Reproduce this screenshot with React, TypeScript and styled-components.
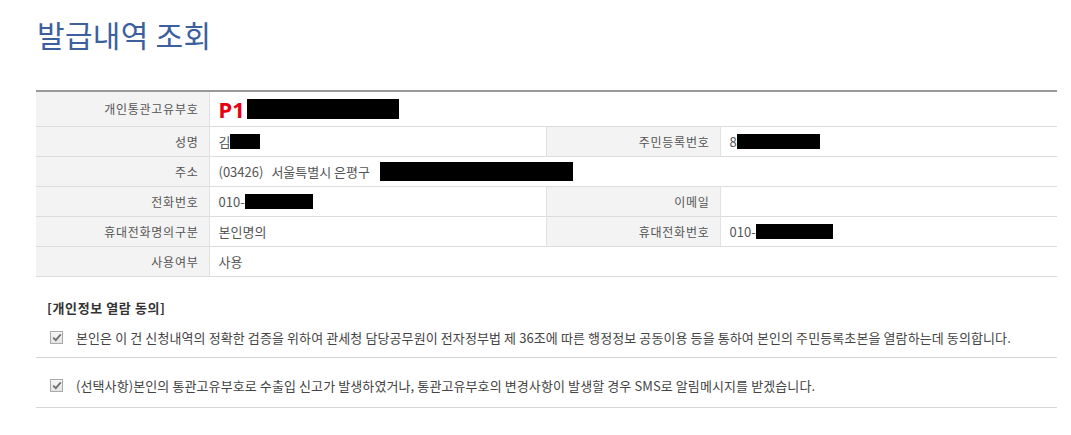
import React from 'react';
import styled, { createGlobalStyle } from 'styled-components';

const GlobalStyle = createGlobalStyle`
  body {
    margin: 0;
    background: #ffffff;
    font-family: "Noto Sans CJK KR", "Noto Sans", sans-serif;
    color: #555;
  }
`;

const Page = styled.div`
  width: 1021px;
  padding: 13px 0 0 36px;
`;

const Title = styled.h2`
  margin: 0 0 0 1px;
  font-size: 30px;
  line-height: 42px;
  font-weight: 400;
  color: #3d5f9e;
  letter-spacing: 0.3px;
`;

const InfoTable = styled.table`
  width: 1021px;
  margin-top: 35px;
  border-collapse: collapse;
  table-layout: fixed;
  border-top: 2px solid #999;
`;

const Row = styled.tr<{ $tall?: boolean }>`
  height: ${(p) => (p.$tall ? '35px' : '30px')};
  border-bottom: 1px solid #dcdcdc;
`;

const Label = styled.th`
  background: #f3f3f3;
  color: #555;
  font-size: 12px;
  font-weight: 400;
  letter-spacing: 0.75px;
  text-align: right;
  padding: 0 10px 0 0;
  border-right: 1px solid #e2e2e2;
  white-space: nowrap;
`;

const Value = styled.td<{ $edge?: boolean }>`
  padding: 0 0 0 9px;
  font-size: 13px;
  color: #555;
  white-space: nowrap;
  border-right: ${(p) => (p.$edge ? 'none' : '1px solid #e2e2e2')};
`;

const Cell = styled.span`
  display: inline-flex;
  align-items: center;
  vertical-align: middle;
`;

const Masked = styled.span<{ $w: number; $h: number; $gap?: number }>`
  display: inline-block;
  width: ${(p) => p.$w}px;
  height: ${(p) => p.$h}px;
  margin-left: ${(p) => p.$gap ?? 0}px;
  background: #000;
`;

const Code = styled.span`
  color: #e60012;
  font-family: "Noto Sans", "Liberation Sans", sans-serif;
  font-weight: 700;
  font-size: 22px;
  line-height: 24px;
  margin-right: 2px;
`;

const Zip = styled.span`
  margin-right: 8px;
`;

const Consent = styled.section`
  margin-top: 22px;
  width: 1021px;
`;

const ConsentTitle = styled.div`
  font-size: 13px;
  font-weight: 700;
  color: #333;
  line-height: 18px;
  padding-left: 11px;
  letter-spacing: 0.6px;
`;

const ConsentItem = styled.label<{ $first?: boolean }>`
  display: flex;
  align-items: center;
  gap: 13px;
  padding: ${(p) => (p.$first ? '12px 0 10px 14px' : '19px 0 12px 14px')};
  border-bottom: 1px solid #d8d8d8;
  font-size: 13px;
  line-height: 18px;
  color: #444;
  letter-spacing: 0.1px;
`;

const Box = styled.span`
  display: inline-flex;
  align-items: center;
  justify-content: center;
  width: 11px;
  height: 11px;
  border: 1px solid #a9a9a9;
  background: linear-gradient(#f6f6f6, #e4e4e4);
  flex-shrink: 0;
`;

const CheckBox = () => (
  <Box>
    <svg width="10" height="9" viewBox="0 0 10 9">
      <path d="M1.2 4.6 L3.8 7.2 L8.8 1.4" fill="none" stroke="#6f6f6f" strokeWidth="1.8" />
    </svg>
  </Box>
);

const App: React.FC = () => (
  <Page>
    <GlobalStyle />
    <Title>발급내역 조회</Title>
    <InfoTable>
      <colgroup>
        <col style={{ width: 173 }} />
        <col style={{ width: 337 }} />
        <col style={{ width: 174 }} />
        <col style={{ width: 337 }} />
      </colgroup>
      <tbody>
        <Row $tall>
          <Label>개인통관고유부호</Label>
          <Value colSpan={3} $edge>
            <Cell>
              <Code>P1</Code>
              <Masked $w={152} $h={20} />
            </Cell>
          </Value>
        </Row>
        <Row>
          <Label>성명</Label>
          <Value>
            <Cell>
              김<Masked $w={30} $h={15} />
            </Cell>
          </Value>
          <Label>주민등록번호</Label>
          <Value $edge>
            <Cell>
              8<Masked $w={83} $h={15} />
            </Cell>
          </Value>
        </Row>
        <Row>
          <Label>주소</Label>
          <Value colSpan={3} $edge>
            <Cell>
              <Zip>(03426)</Zip>서울특별시 은평구
              <Masked $w={193} $h={19} $gap={10} />
            </Cell>
          </Value>
        </Row>
        <Row>
          <Label>전화번호</Label>
          <Value>
            <Cell>
              010-<Masked $w={68} $h={15} />
            </Cell>
          </Value>
          <Label>이메일</Label>
          <Value $edge />
        </Row>
        <Row>
          <Label>휴대전화명의구분</Label>
          <Value>본인명의</Value>
          <Label>휴대전화번호</Label>
          <Value $edge>
            <Cell>
              010-<Masked $w={77} $h={15} />
            </Cell>
          </Value>
        </Row>
        <Row>
          <Label>사용여부</Label>
          <Value colSpan={3} $edge>사용</Value>
        </Row>
      </tbody>
    </InfoTable>
    <Consent>
      <ConsentTitle>[개인정보 열람 동의]</ConsentTitle>
      <ConsentItem $first>
        <CheckBox />
        본인은 이 건 신청내역의 정확한 검증을 위하여 관세청 담당공무원이 전자정부법 제 36조에 따른 행정정보 공동이용 등을 통하여 본인의 주민등록초본을 열람하는데 동의합니다.
      </ConsentItem>
      <ConsentItem>
        <CheckBox />
        (선택사항)본인의 통관고유부호로 수출입 신고가 발생하였거나, 통관고유부호의 변경사항이 발생할 경우 SMS로 알림메시지를 받겠습니다.
      </ConsentItem>
    </Consent>
  </Page>
);

export default App;
